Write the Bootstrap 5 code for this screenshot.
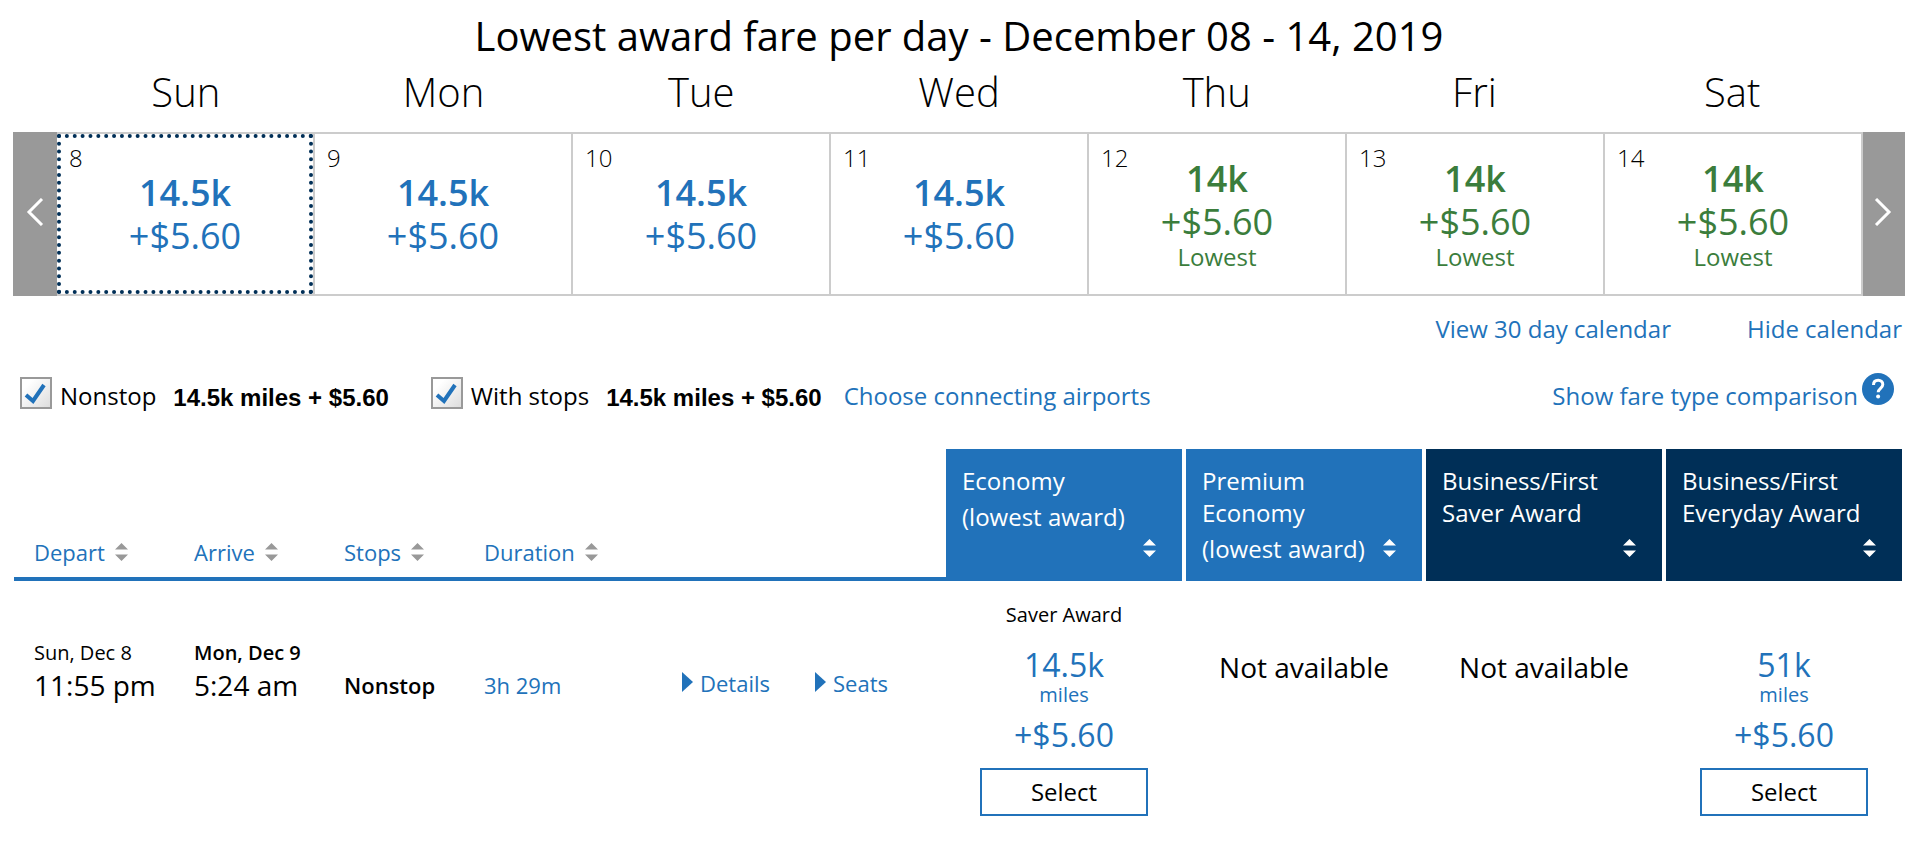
<!DOCTYPE html>
<html lang="en">
<head>
<meta charset="utf-8">
<meta name="viewport" content="width=device-width, initial-scale=1">
<title>Award fares</title>
<link href="https://cdn.jsdelivr.net/npm/bootstrap@5.3.0/dist/css/bootstrap.min.css" rel="stylesheet">
<style>
  :root { --brand: #2172ba; --navy: #002f57; --low: #3b7d3c; --line: #ccc; --nav: #999; }
  body { font-family: "Open Sans", "Noto Sans", sans-serif; font-size: 24px; line-height: 32px; color: #000; background: #fff; }
  a { color: var(--brand); text-decoration: none; }
  a:hover { text-decoration: underline; }
  button { color: inherit; }
  .page { padding: 8px 6px 16px 13px; }
  .page-title { font-size: 40px; line-height: 56px; font-weight: 400; }
  .weekdays { padding: 0 44px 0 44px; font-size: 40px; line-height: 56px; font-weight: 300; margin-bottom: 12px; }
  .week > *, .weekdays > * { flex: 1 1 0; min-width: 0; }
  .week { min-height: 164px; }
  .week > .week-nav { flex: 0 0 44px; background: var(--nav); border: 0; padding: 0 0 4px; }
  .week > .week-nav.next { flex-basis: 42px; padding-right: 2px; }
  .day { background: #fff; border: solid var(--line); border-width: 2px 2px 2px 0; padding: 0; color: var(--brand); font-size: 36px; line-height: 43px; }
  .day.picked::before { content: ""; position: absolute; inset: 0; border: 4px dotted var(--navy); }
  .day.lowest { color: var(--low); }
  .day-num { position: absolute; left: 12px; top: 8px; font-size: 24px; line-height: 32px; font-weight: 300; color: #000; }
  .day-note { font-size: 24px; line-height: 28px; }
  .calendar-links { margin-top: 17px; padding-right: 3px; gap: 76px; }
  .filters { min-height: 37px; margin-top: 28px; padding: 0 11px 0 7px; line-height: 28px; }
  .filters .form-check-input { width: 32px; height: 32px; margin: 0 8px 1px 0; border: 2px solid var(--nav); border-radius: 0; }
  .filters .form-check-input:checked { background: url("data:image/svg+xml,%3csvg xmlns='http://www.w3.org/2000/svg' viewBox='0 0 28 28'%3e%3cpath d='M4 16l7 6L22 6' fill='none' stroke='%232172ba' stroke-width='4'/%3e%3c/svg%3e") center / 28px no-repeat, linear-gradient(135deg, #fff 20%, #ddd); }
  .fare-sum { font-family: "Liberation Sans", Arial, sans-serif; font-weight: 700; line-height: 24px; margin: 0 42px 0 17px; }
  .airports { margin-left: -20px; }
  .flights { width: calc(100% - 4px); margin: 39px 0 0 1px; table-layout: fixed; border-collapse: separate; border-spacing: 0; }
  .flights th, .flights td { padding: 0; font-weight: 400; vertical-align: top; }
  .flights .plain { border-bottom: 4px solid var(--brand); vertical-align: bottom; padding: 0 0 11px 20px; }
  .sorter { background: none; border: 0; padding: 0; text-align: left; }
  .plain .sorter { color: var(--brand); font-size: 22px; line-height: 28px; gap: 10px; }
  .sorter svg { flex: none; width: 13px; height: 18px; fill: currentColor; }
  .plain .sorter svg { color: var(--nav); }
  .fare-head { background: var(--brand); color: #fff; background-clip: padding-box; height: 132px; }
  .fare-head.premium-cabin { background-color: var(--navy); }
  .fare-head:not(:last-child), .fare:not(:last-child) { border-right: 4px solid #fff; }
  .fare-head .sorter { width: 100%; height: 132px; padding: 16px 26px 24px 16px; }
  .flights tbody td { font-size: 22px; line-height: 28px; }
  .flights .when { padding: 60px 0 0 20px; font-size: 20px; line-height: 24px; }
  .clock { font-size: 28px; line-height: 40px; }
  .flights .fact { padding: 90px 0 0 20px; }
  .flights .expand { padding: 88px 0 0 20px; }
  .expand-links { gap: 45px; }
  .expand svg { width: 11px; height: 20px; fill: currentColor; margin: 3px 7px 0 0; }
  .expand .btn-link { font-size: 22px; line-height: 28px; color: var(--brand); text-decoration: none; padding: 0; border: 0; }
  .flights .fare { padding-top: 22px; text-align: center; }
  .award { min-height: 24px; font-size: 20px; line-height: 24px; margin-bottom: 20px; }
  .amount { font-size: 32px; line-height: 36px; color: var(--brand); }
  .unit { font-size: 20px; line-height: 24px; color: var(--brand); margin-bottom: 10px; }
  .select-btn { width: 168px; height: 48px; margin-top: 15px; padding: 0; background: #fff; border: 2px solid var(--brand); border-radius: 0; font-size: 24px; line-height: 40px; color: #000; }
</style>
</head>
<body>
<svg class="d-none" aria-hidden="true">
  <symbol id="sort" viewBox="0 0 13 18"><path d="M6.500 0L13 6.500H0zM0 11.500h13L6.500 18z"/></symbol>
  <symbol id="tri" viewBox="0 0 11 20"><path d="M0 0l11 10L0 20z"/></symbol>
</svg>
<main class="page">
  <h1 class="page-title text-center mb-0">Lowest award fare per day - December 08 - 14, 2019</h1>

  <div class="weekdays d-flex text-center">
    <div>Sun</div><div>Mon</div><div>Tue</div><div>Wed</div><div>Thu</div><div>Fri</div><div>Sat</div>
  </div>
  <div class="week d-flex">
    <button type="button" class="week-nav d-flex align-items-center justify-content-center" aria-label="Previous week">
      <svg width="18" height="28" viewBox="0 0 18 28" fill="none" stroke="#fff" stroke-width="3"><path d="M16 1L3 14l13 13"/></svg>
    </button>
    <button type="button" class="day picked position-relative"><span class="day-num">8</span><span class="d-block fw-semibold">14.5k</span><span class="d-block">+$5.60</span></button>
    <button type="button" class="day position-relative"><span class="day-num">9</span><span class="d-block fw-semibold">14.5k</span><span class="d-block">+$5.60</span></button>
    <button type="button" class="day position-relative"><span class="day-num">10</span><span class="d-block fw-semibold">14.5k</span><span class="d-block">+$5.60</span></button>
    <button type="button" class="day position-relative"><span class="day-num">11</span><span class="d-block fw-semibold">14.5k</span><span class="d-block">+$5.60</span></button>
    <button type="button" class="day lowest position-relative"><span class="day-num">12</span><span class="d-block fw-semibold">14k</span><span class="d-block">+$5.60</span><span class="d-block day-note">Lowest</span></button>
    <button type="button" class="day lowest position-relative"><span class="day-num">13</span><span class="d-block fw-semibold">14k</span><span class="d-block">+$5.60</span><span class="d-block day-note">Lowest</span></button>
    <button type="button" class="day lowest position-relative"><span class="day-num">14</span><span class="d-block fw-semibold">14k</span><span class="d-block">+$5.60</span><span class="d-block day-note">Lowest</span></button>
    <button type="button" class="week-nav next d-flex align-items-center justify-content-center" aria-label="Next week">
      <svg width="18" height="28" viewBox="0 0 18 28" fill="none" stroke="#fff" stroke-width="3"><path d="M2 1l13 13L2 27"/></svg>
    </button>
  </div>

  <div class="calendar-links d-flex justify-content-end">
    <a href="#">View 30 day calendar</a>
    <a href="#">Hide calendar</a>
  </div>

  <div class="filters d-flex align-items-end">
    <input class="form-check-input" type="checkbox" id="nonstop" checked>
    <label for="nonstop">Nonstop</label>
    <span class="fare-sum">14.5k miles + $5.60</span>
    <input class="form-check-input" type="checkbox" id="stops" checked>
    <label for="stops">With stops</label>
    <span class="fare-sum">14.5k miles + $5.60</span>
    <a href="#" class="airports">Choose connecting airports</a>
    <a href="#" class="ms-auto">Show fare type comparison</a>
    <a href="#" class="align-self-start ms-1 d-flex" aria-label="Fare type help">
      <svg width="32" height="32" viewBox="0 0 32 32"><circle cx="16" cy="16" r="16" fill="#2172ba"/><path d="M11.500 12c0-3 2-4.700 4.700-4.700s4.600 1.700 4.600 4.200c0 3.700-4.600 3.900-4.600 7.800" fill="none" stroke="#fff" stroke-width="3"/><circle cx="16.100" cy="23.600" r="2" fill="#fff"/></svg>
    </a>
  </div>

  <table class="flights">
    <colgroup>
      <col width="160"><col width="150"><col width="140"><col width="198"><col>
      <col width="240"><col width="240"><col width="240"><col width="236">
    </colgroup>
    <thead>
      <tr>
        <th class="plain" scope="col"><button type="button" class="sorter d-flex align-items-center">Depart<svg><use href="#sort"/></svg></button></th>
        <th class="plain" scope="col"><button type="button" class="sorter d-flex align-items-center">Arrive<svg><use href="#sort"/></svg></button></th>
        <th class="plain" scope="col"><button type="button" class="sorter d-flex align-items-center">Stops<svg><use href="#sort"/></svg></button></th>
        <th class="plain" scope="col"><button type="button" class="sorter d-flex align-items-center">Duration<svg><use href="#sort"/></svg></button></th>
        <td class="plain"></td>
        <th class="fare-head" scope="col"><button type="button" class="sorter d-flex justify-content-between align-items-end"><span class="align-self-start text-nowrap">Economy<span class="d-block mt-1">(lowest award)</span></span><svg><use href="#sort"/></svg></button></th>
        <th class="fare-head" scope="col"><button type="button" class="sorter d-flex justify-content-between align-items-end"><span class="align-self-start text-nowrap">Premium<br>Economy<span class="d-block mt-1">(lowest award)</span></span><svg><use href="#sort"/></svg></button></th>
        <th class="fare-head premium-cabin" scope="col"><button type="button" class="sorter d-flex justify-content-between align-items-end"><span class="align-self-start text-nowrap">Business/First<br>Saver Award</span><svg><use href="#sort"/></svg></button></th>
        <th class="fare-head premium-cabin" scope="col"><button type="button" class="sorter d-flex justify-content-between align-items-end"><span class="align-self-start text-nowrap">Business/First<br>Everyday Award</span><svg><use href="#sort"/></svg></button></th>
      </tr>
    </thead>
    <tbody>
      <tr>
        <td class="when">Sun, Dec 8<div class="clock">11:55 pm</div></td>
        <td class="when"><span class="fw-semibold">Mon, Dec 9</span><div class="clock">5:24 am</div></td>
        <td class="fact fw-semibold">Nonstop</td>
        <td class="fact"><a href="#">3h 29m</a></td>
        <td class="expand">
          <div class="expand-links d-flex">
            <button type="button" class="btn btn-link d-flex align-items-start"><svg><use href="#tri"/></svg>Details</button>
            <button type="button" class="btn btn-link d-flex align-items-start"><svg><use href="#tri"/></svg>Seats</button>
          </div>
        </td>
        <td class="fare"><div class="award">Saver Award</div><div class="amount">14.5k</div><div class="unit">miles</div><div class="amount">+$5.60</div><button type="button" class="select-btn">Select</button></td>
        <td class="fare"><div class="award"></div><div class="clock">Not available</div></td>
        <td class="fare"><div class="award"></div><div class="clock">Not available</div></td>
        <td class="fare"><div class="award"></div><div class="amount">51k</div><div class="unit">miles</div><div class="amount">+$5.60</div><button type="button" class="select-btn">Select</button></td>
      </tr>
    </tbody>
  </table>
</main>
<script src="https://cdn.jsdelivr.net/npm/bootstrap@5.3.0/dist/js/bootstrap.bundle.min.js"></script>
</body>
</html>
